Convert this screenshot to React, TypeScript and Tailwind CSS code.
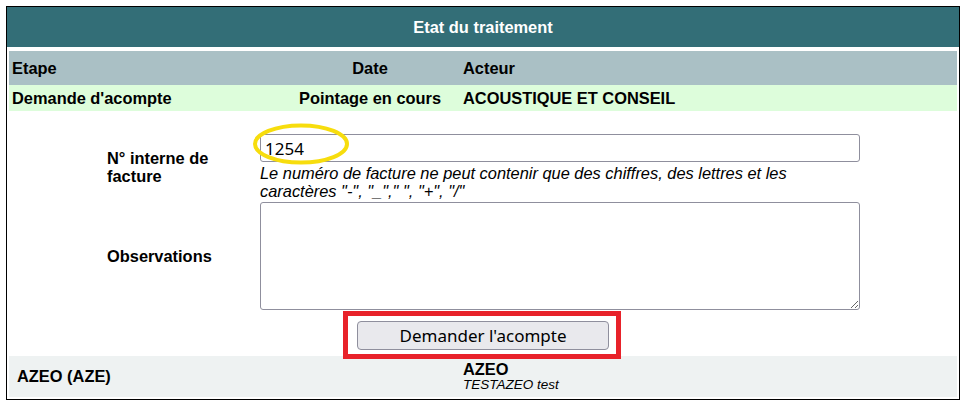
import React from 'react';

export default function App() {
    return (
        <div className="w-[966px] h-[406px] bg-white pt-[6px] pl-[6px] font-['Liberation_Sans',Arial,sans-serif] text-black">
            <div className="w-[954px] h-[394px] border border-black flex flex-col">
                <div className="h-[40px] shrink-0 bg-[#336e77] text-white font-bold text-[16.4px] flex items-center justify-center">
                    Etat du traitement
                </div>
                <div className="flex-1 flex flex-col px-[2px] pt-[4px] pb-[2px]">
                    <div className="h-[34px] shrink-0 bg-[#aac0c5] grid grid-cols-[287px_148px_1fr] items-center font-bold text-[16.4px]">
                        <div className="pl-[3px]">Etape</div>
                        <div className="text-center">Date</div>
                        <div className="pl-[19px]">Acteur</div>
                    </div>
                    <div className="h-[26px] shrink-0 bg-[#ddfddb] grid grid-cols-[287px_148px_1fr] items-center font-bold text-[16.4px]">
                        <div className="pl-[3px]">Demande d'acompte</div>
                        <div className="text-center whitespace-nowrap">Pointage en cours</div>
                        <div className="pl-[19px]">ACOUSTIQUE ET CONSEIL</div>
                    </div>

                    <div className="h-[245px] shrink-0 flex flex-col pt-[23px]">
                        <div className="flex items-center">
                            <div className="w-[251px] pl-[98px] pr-[20px] font-bold text-[16.4px] leading-[18px]">
                                N° interne de facture
                            </div>
                            <div className="w-[600px] flex flex-col">
                                <div className="relative">
                                    <input
                                        type="text"
                                        defaultValue="1254"
                                        className="w-[600px] h-[28px] border border-[#8f8f9d] rounded-[3px] px-[4px] text-[17px] font-['Noto_Sans',sans-serif] outline-none bg-white"
                                    />
                                    <svg className="absolute left-[-8px] top-[-11px] pointer-events-none" width="98" height="42" viewBox="0 0 98 42">
                                        <ellipse cx="49" cy="21" rx="46" ry="18.5" fill="none" stroke="#f7dd0d" strokeWidth="4" />
                                    </svg>
                                </div>
                                <p className="mt-[2px] italic text-[16.4px] leading-[18px]">
                                    Le numéro de facture ne peut contenir que des chiffres, des lettres et les caractères "-", "_"," ", "+", "/"
                                </p>
                            </div>
                        </div>

                        <div className="flex items-center mt-[2px]">
                            <div className="w-[251px] pl-[98px] pr-[20px] font-bold text-[16.4px] leading-[18px]">
                                Observations
                            </div>
                            <textarea className="w-[600px] h-[108px] border border-[#8f8f9d] rounded-[3px] bg-white outline-none" />
                        </div>

                        <div className="flex justify-center mt-[11px]">
                            <div className="relative">
                                <button className="w-[252px] h-[29px] bg-[#e9e9ed] border border-[#8f8f9d] rounded-[4px] text-[17px] font-['Noto_Sans',sans-serif] leading-none">
                                    Demander l'acompte
                                </button>
                                <div className="absolute left-[-14px] right-[-12px] top-[-10px] bottom-[-9px] border-[5px] border-[#e8222a] pointer-events-none" />
                            </div>
                        </div>
                    </div>

                    <div className="h-[41px] shrink-0 bg-[#eef2f2] grid grid-cols-[435px_1fr] items-center">
                        <div className="pl-[8px] font-bold text-[16.4px]">AZEO (AZE)</div>
                        <div className="pl-[19px] flex flex-col">
                            <span className="font-bold text-[16.4px] leading-[16px]">AZEO</span>
                            <span className="italic text-[13.5px] leading-[16px]">TESTAZEO test</span>
                        </div>
                    </div>
                </div>
            </div>
        </div>
    );
}
